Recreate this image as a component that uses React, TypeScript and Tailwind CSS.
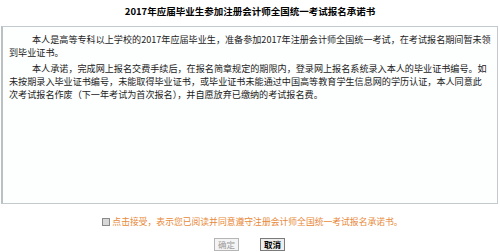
const paragraphs = [
  [
    '本人是高等专科以上学校的2017年应届毕业生，准备参加2017年注册会计师全国统一考试，在考试报名期间暂未领',
    '到毕业证书。',
  ],
  [
    '本人承诺，完成网上报名交费手续后，在报名简章规定的期限内，登录网上报名系统录入本人的毕业证书编号。如',
    '未按期录入毕业证书编号，未能取得毕业证书，或毕业证书未能通过中国高等教育学生信息网的学历认证，本人同意此',
    '次考试报名作废（下一年考试为首次报名），并自愿放弃已缴纳的考试报名费。',
  ],
];

export default function App() {
  return (
    <div className="w-[500px] h-[252px] bg-white overflow-hidden font-['SimSun','Noto_Sans_CJK_SC',sans-serif] text-[#222]">
      <div className="h-[22px] flex items-center justify-center text-[9.5px] font-bold text-black">
        2017年应届毕业生参加注册会计师全国统一考试报名承诺书
      </div>

      <div className="mt-[4px] ml-[1px] mr-[2px] h-[178px] border border-[#c3c9cc] border-l-2 border-l-[#b9c1c2] bg-[#fdfefe] px-[6px] pt-[6px]">
        {paragraphs.map((lines, i) => (
          <p key={i} className={`text-[9.1px] leading-[13px] whitespace-nowrap ${i > 0 ? 'mt-[3px]' : ''}`}>
            {lines.map((line, j) => (
              <span key={j} className={`block ${j === 0 ? 'pl-[23px]' : ''}`}>
                {line}
              </span>
            ))}
          </p>
        ))}
      </div>

      <div className="mt-[12px] flex items-center justify-center gap-[2px] h-[12px] pl-[5px]">
        <span className="w-[8px] h-[8px] border border-[#8a8a8a] bg-[#d8d8d8]" />
        <span className="text-[8.8px] text-[#e8893a]">
          点击接受，表示您已阅读并同意遵守注册会计师全国统一考试报名承诺书。
        </span>
      </div>

      <div className="mt-[10px] flex justify-center gap-[21px] pr-[1px]">
        <button disabled className="w-[25px] h-[13px] border border-[#b5b5b5] bg-[#f4f4f4] text-[8.5px] leading-none text-[#9a9a9a]">
          确定
        </button>
        <button className="w-[25px] h-[13px] border border-[#7a7a7a] bg-[#eeeeee] text-[8.5px] leading-none text-black font-bold">
          取消
        </button>
      </div>
    </div>
  );
}
